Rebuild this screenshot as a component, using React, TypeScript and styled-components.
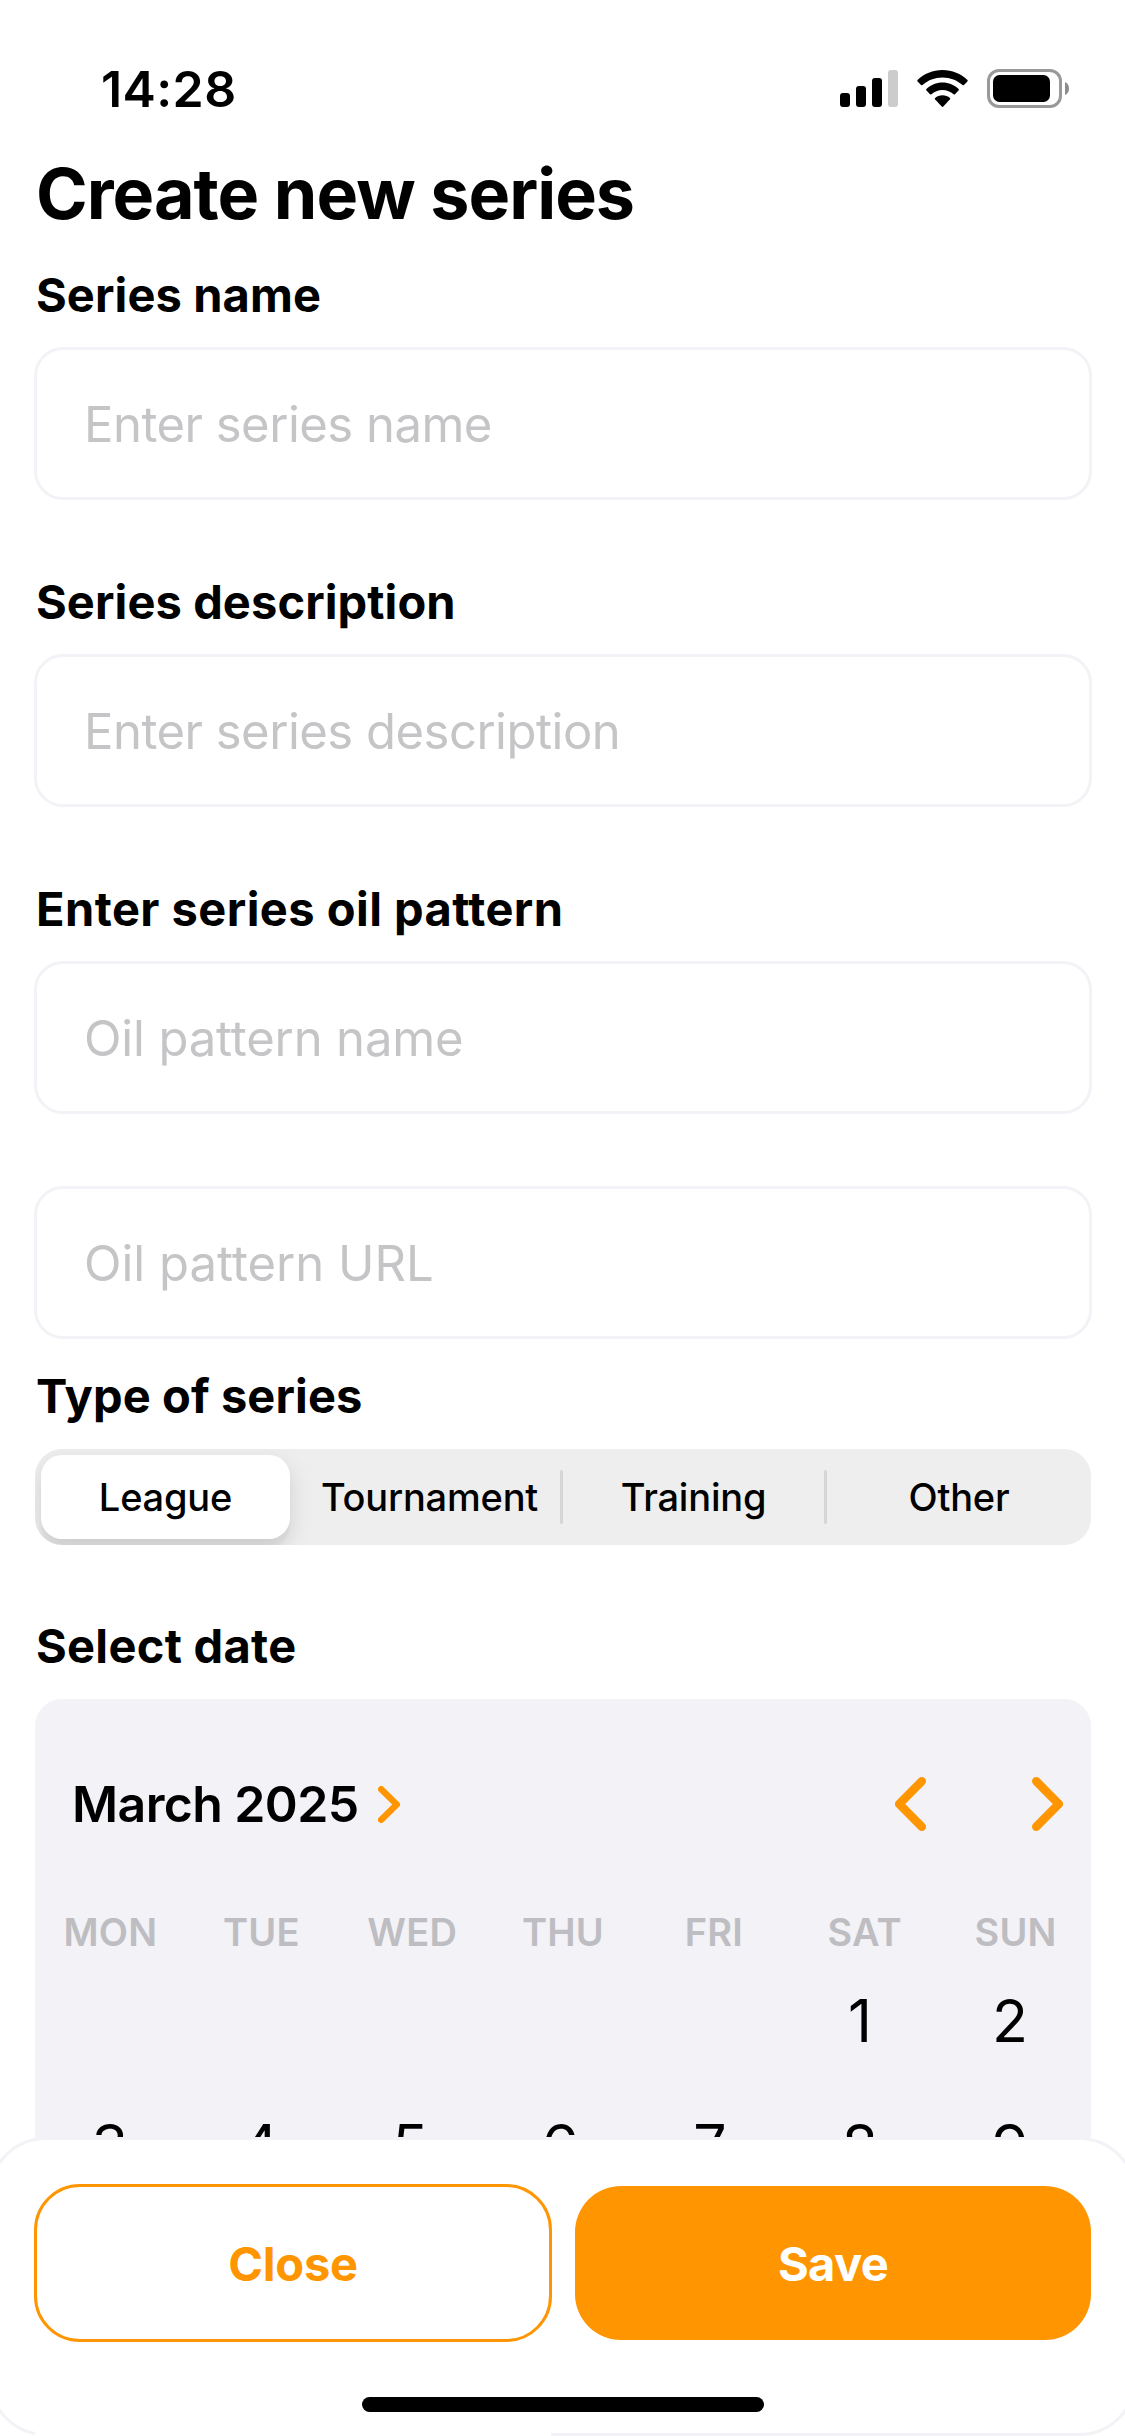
import React from 'react';
import styled, { createGlobalStyle } from 'styled-components';

const GlobalStyle = createGlobalStyle`
  *, *::before, *::after { box-sizing: border-box; }
  body {
    margin: 0;
    background: #fff;
    color: #000;
    font-family: Inter, 'Liberation Sans', sans-serif;
  }
  h1, h2, p { margin: 0; }
  button, input { font: inherit; color: inherit; }
`;

const accent = '#ff9500';
const line = '#f2f2f7';

const Screen = styled.div`
  position: relative;
  width: 1125px;
  height: 2436px;
  overflow: hidden;
  background: #fff;
`;

const StatusBar = styled.header`
  display: flex;
  align-items: center;
  justify-content: space-between;
  height: 132px;
  padding: 46px 56px 0 101px;
`;

const Clock = styled.span`
  font-size: 50px;
  line-height: 60px;
  font-weight: 600;
  letter-spacing: 0.4px;
`;

const Indicators = styled.div`
  display: flex;
  align-items: center;
  gap: 19px;
`;

const Content = styled.main`
  display: flex;
  flex-direction: column;
  padding: 0 34px 0 35px;
`;

const Title = styled.h1`
  height: 124px;
  padding: 20px 0 0 1px;
  font-size: 70px;
  line-height: 84px;
  font-weight: 700;
  letter-spacing: -1px;
  white-space: nowrap;
`;

const Label = styled.h2<{ $gap?: number; $tight?: boolean; $tracking?: number }>`
  height: ${(p) => (p.$tight ? 90 : 91)}px;
  margin-top: ${(p) => p.$gap ?? 0}px;
  padding: ${(p) => (p.$tight ? 8 : 10)}px 0 0 1px;
  font-size: 47px;
  line-height: 58px;
  font-weight: 700;
  letter-spacing: ${(p) => p.$tracking ?? 0.1}px;
  white-space: nowrap;
`;

const Field = styled.input<{ $gap?: number; $tracking?: number }>`
  height: 153px;
  margin: ${(p) => p.$gap ?? 0}px -1px 0;
  padding: 1px 47px 0;
  border: 3px solid ${line};
  border-radius: 29px;
  background: #fff;
  font-size: 49px;
  letter-spacing: ${(p) => p.$tracking ?? -0.5}px;
  outline: none;
  &::placeholder { color: #c5c5c7; opacity: 1; }
`;

const Segmented = styled.div`
  display: grid;
  grid-template-columns: repeat(4, 264px);
  height: 96px;
  border-radius: 27px;
  background: #eeeeef;
  overflow: hidden;
`;

const Segment = styled.button<{ $active?: boolean; $divided?: boolean }>`
  display: flex;
  align-items: center;
  justify-content: center;
  position: relative;
  margin: ${(p) => (p.$active ? '6px 9px 6px 6px' : '0')};
  padding: ${(p) => (p.$divided ? '0 3px 0 0' : '0')};
  border: 0;
  border-radius: ${(p) => (p.$active ? '21px' : '0')};
  background: ${(p) => (p.$active ? '#fff' : 'transparent')};
  box-shadow: ${(p) => (p.$active ? '0 9px 24px rgba(0,0,0,.12), 0 9px 3px rgba(0,0,0,.04)' : 'none')};
  font-size: 38px;
  font-weight: 500;
  letter-spacing: -0.2px;
  &::after {
    content: '';
    display: ${(p) => (p.$divided ? 'block' : 'none')};
    position: absolute;
    right: 0;
    top: 21px;
    width: 3px;
    height: 54px;
    border-radius: 2px;
    background: #d6d6d7;
  }
`;

const Calendar = styled.section`
  height: 700px;
  border-radius: 27px;
  background: ${line};
`;

const MonthBar = styled.div`
  display: flex;
  align-items: center;
  height: 210px;
  padding: 0 28px 0 37px;
`;

const Month = styled.span`
  font-size: 50px;
  font-weight: 600;
  letter-spacing: -0.6px;
  margin-right: 19px;
`;

const MonthNav = styled.div`
  display: flex;
  gap: 106px;
  margin-left: auto;
`;

const WeekRow = styled.div`
  display: grid;
  grid-template-columns: repeat(7, 1fr);
  height: 48px;
  padding-bottom: 3px;
  align-items: center;
  text-align: center;
  font-size: 38px;
  font-weight: 600;
  letter-spacing: 0.2px;
  color: #bdbdc2;
`;

const DayGrid = styled.div`
  display: grid;
  grid-template-columns: repeat(7, 150px);
  grid-auto-rows: 125px;
  margin-top: 1px;
  align-items: center;
  text-align: center;
  font-size: 59px;
`;

const Day = styled.span<{ $column?: number }>`
  grid-column: ${(p) => p.$column ?? 'auto'};
`;

const Sheet = styled.footer`
  position: absolute;
  left: -12px;
  right: -12px;
  bottom: 0;
  height: 299px;
  padding: 44px 43px 0;
  border: 3px solid ${line};
  border-radius: 58px;
  background: #fff;
  &::after {
    content: '';
    position: absolute;
    left: 44px;
    bottom: -3px;
    width: 516px;
    height: 4px;
    background: #fff;
  }
`;

const Actions = styled.div`
  display: grid;
  grid-template-columns: 518px 516px;
  gap: 23px;
  align-items: center;
  height: 158px;
`;

const Action = styled.button<{ $primary?: boolean }>`
  height: ${(p) => (p.$primary ? 154 : 158)}px;
  padding: 0;
  border: ${(p) => (p.$primary ? '0' : `3px solid ${accent}`)};
  border-radius: 46px;
  background: ${(p) => (p.$primary ? accent : '#fff')};
  color: ${(p) => (p.$primary ? '#fff' : accent)};
  font-size: 47px;
  font-weight: 700;
  letter-spacing: ${(p) => (p.$primary ? '-0.6px' : '-0.2px')};
`;

const HomeIndicator = styled.div`
  width: 402px;
  height: 15px;
  margin: 55px auto 0;
  border-radius: 8px;
  background: #000;
`;

function Signal() {
  return (
    <svg width="58" height="38" viewBox="0 0 58 38">
      <rect x="0" y="23" width="10" height="14" rx="3" />
      <rect x="16" y="16" width="10" height="21" rx="3" />
      <rect x="32" y="8" width="10" height="29" rx="3" />
      <rect x="48" y="0" width="10" height="37" rx="3" fill="#ccc" />
    </svg>
  );
}

function Wifi() {
  return (
    <svg width="51" height="38" viewBox="0 0 51 38">
      <path d="M25.500 0 C35.200 0 44 3.700 50.500 10 Q51 10.700 50.400 11.400 L47 15 Q46.300 15.600 45.600 15 C40.200 10.200 33.200 7.400 25.500 7.400 C17.800 7.400 10.800 10.200 5.400 15 Q4.700 15.600 4 15 L0.600 11.400 Q0 10.700 0.500 10 C7 3.700 15.800 0 25.500 0 Z" />
      <path d="M25.500 12.500 C31.700 12.500 37.300 15 41.600 18.900 Q42.300 19.600 41.700 20.300 L38 24.200 Q37.300 24.900 36.600 24.200 C33.600 21.500 29.700 19.900 25.500 19.900 C21.300 19.900 17.400 21.500 14.400 24.200 Q13.700 24.900 13 24.200 L9.300 20.300 Q8.700 19.600 9.400 18.900 C13.700 15 19.300 12.500 25.500 12.500 Z" />
      <path d="M25.500 25.300 C28.300 25.300 30.900 26.200 32.900 27.900 Q33.600 28.600 33 29.300 L26.300 36.500 Q25.500 37.300 24.700 36.500 L18 29.300 Q17.400 28.600 18.100 27.900 C20.100 26.200 22.700 25.300 25.500 25.300 Z" />
    </svg>
  );
}

function Battery() {
  return (
    <svg width="82" height="40" viewBox="0 0 82 40">
      <rect x="1.500" y="1.500" width="72" height="36" rx="10.500" fill="none" stroke="#999" strokeWidth="3" />
      <rect x="6" y="6" width="57" height="27" rx="6.500" />
      <path d="M78 13 C80.500 14 82 16.500 82 19.500 C82 22.500 80.500 25 78 26 Z" fill="#8c8c8c" />
    </svg>
  );
}

function Chevron({ width, height, stroke, left }: { width: number; height: number; stroke: number; left?: boolean }) {
  const h = stroke / 2;
  const tip = left ? h : width - h;
  const back = left ? width - h : h;
  return (
    <svg width={width} height={height} viewBox={`0 0 ${width} ${height}`} fill="none">
      <path
        d={`M${back} ${h} L${tip} ${height / 2} L${back} ${height - h}`}
        stroke={accent}
        strokeWidth={stroke}
        strokeLinecap="round"
        strokeLinejoin="round"
      />
    </svg>
  );
}

const weekdays = ['MON', 'TUE', 'WED', 'THU', 'FRI', 'SAT', 'SUN'];
const days = [1, 2, 3, 4, 5, 6, 7, 8, 9];

export default function App() {
  return (
    <Screen>
      <GlobalStyle />
      <StatusBar>
        <Clock>14:28</Clock>
        <Indicators>
          <Signal />
          <Wifi />
          <Battery />
        </Indicators>
      </StatusBar>
      <Content>
        <Title>Create new series</Title>
        <Label>Series name</Label>
        <Field placeholder="Enter series name" />
        <Label $gap={63}>Series description</Label>
        <Field placeholder="Enter series description" />
        <Label $gap={63} $tracking={0.45}>Enter series oil pattern</Label>
        <Field $tracking={-0.15} placeholder="Oil pattern name" />
        <Field $gap={72} $tracking={0.01} placeholder="Oil pattern URL" />
        <Label $gap={20} $tight>Type of series</Label>
        <Segmented>
          <Segment $active>League</Segment>
          <Segment $divided>Tournament</Segment>
          <Segment $divided>Training</Segment>
          <Segment>Other</Segment>
        </Segmented>
        <Label $gap={64} $tight $tracking={0.3}>Select date</Label>
        <Calendar>
          <MonthBar>
            <Month>March 2025</Month>
            <Chevron width={22} height={37} stroke={6.5} />
            <MonthNav>
              <Chevron width={31} height={54} stroke={8.5} left />
              <Chevron width={31} height={54} stroke={8.5} />
            </MonthNav>
          </MonthBar>
          <WeekRow>
            {weekdays.map((d) => (
              <span key={d}>{d}</span>
            ))}
          </WeekRow>
          <DayGrid>
            {days.map((d) => (
              <Day key={d} $column={d === 1 ? 6 : undefined}>{d}</Day>
            ))}
          </DayGrid>
        </Calendar>
      </Content>
      <Sheet>
        <Actions>
          <Action>Close</Action>
          <Action $primary>Save</Action>
        </Actions>
        <HomeIndicator />
      </Sheet>
    </Screen>
  );
}
